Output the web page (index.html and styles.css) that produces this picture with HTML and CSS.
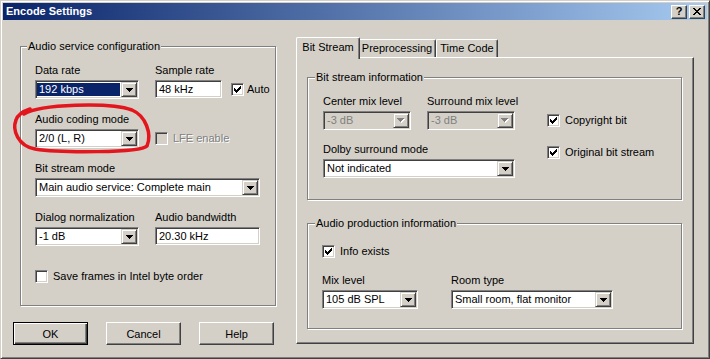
FILE: index.html
```html
<!DOCTYPE html>
<html>
<head>
<meta charset="utf-8">
<title>Encode Settings</title>
<link rel="stylesheet" href="styles.css">
</head>
<body>
<div class="window">
  <div class="titlebar">
    <span class="title">Encode Settings</span>
    <div class="capbtns">
      <span class="capbtn">?</span>
      <span class="capbtn"><svg class="xglyph" width="8" height="7" viewBox="0 0 8 7" shape-rendering="crispEdges"><path d="M0 0h2v1H0zM6 0h2v1H6zM1 1h2v1H1zM5 1h2v1H5zM2 2h4v1H2zM3 3h2v1H3zM2 4h4v1H2zM1 5h2v1H1zM5 5h2v1H5zM0 6h2v1H0zM6 6h2v1H6z"/></svg></span>
    </div>
  </div>

  <div class="client">
    <div class="leftcol">
      <div class="group g-audio">
        <span class="legend">Audio service configuration</span>

        <div class="row">
          <div class="field w104">
            <div class="lbl">Data rate</div>
            <div class="combo"><span class="val sel">192 kbps</span><span class="drop"><svg class="arrow" width="7" height="4" viewBox="0 0 7 4" shape-rendering="crispEdges"><path d="M0 0h7v1H0zM1 1h5v1H1zM2 2h3v1H2zM3 3h1v1H3z"/></svg></span></div>
          </div>
          <div class="field col2">
            <div class="lbl">Sample rate</div>
            <div class="inline">
              <div class="edit w67">48 kHz</div>
              <span class="check cb-auto"><svg width="7" height="7" viewBox="0 0 7 7" shape-rendering="crispEdges"><path d="M6 0h1v3H6zM5 1h1v3H5zM4 2h1v3H4zM3 3h1v3H3zM2 4h1v3H2zM1 3h1v3H1zM0 2h1v3H0z"/></svg></span>
              <span class="cblabel">Auto</span>
            </div>
          </div>
        </div>

        <div class="row gap14">
          <div class="field w104">
            <div class="lbl">Audio coding mode</div>
            <div class="combo"><span class="val">2/0 (L, R)</span><span class="drop"><svg class="arrow" width="7" height="4" viewBox="0 0 7 4" shape-rendering="crispEdges"><path d="M0 0h7v1H0zM1 1h5v1H1zM2 2h3v1H2zM3 3h1v1H3z"/></svg></span></div>
          </div>
          <div class="col2 lfe">
            <span class="check disabled"></span>
            <span class="cblabel dis">LFE enable</span>
          </div>
        </div>

        <div class="row gap14">
          <div class="field w225">
            <div class="lbl">Bit stream mode</div>
            <div class="combo"><span class="val">Main audio service: Complete main</span><span class="drop"><svg class="arrow" width="7" height="4" viewBox="0 0 7 4" shape-rendering="crispEdges"><path d="M0 0h7v1H0zM1 1h5v1H1zM2 2h3v1H2zM3 3h1v1H3z"/></svg></span></div>
          </div>
        </div>

        <div class="row gap14">
          <div class="field w104">
            <div class="lbl">Dialog normalization</div>
            <div class="combo"><span class="val">-1 dB</span><span class="drop"><svg class="arrow" width="7" height="4" viewBox="0 0 7 4" shape-rendering="crispEdges"><path d="M0 0h7v1H0zM1 1h5v1H1zM2 2h3v1H2zM3 3h1v1H3z"/></svg></span></div>
          </div>
          <div class="field col2 w105">
            <div class="lbl">Audio bandwidth</div>
            <div class="edit">20.30 kHz</div>
          </div>
        </div>

        <div class="cbrow saveframes">
          <span class="check"></span>
          <span class="cblabel">Save frames in Intel byte order</span>
        </div>
      </div>

      <div class="buttons">
        <div class="btn default">OK</div>
        <div class="btn">Cancel</div>
        <div class="btn">Help</div>
      </div>
    </div>

    <div class="rightcol">
      <div class="tabs">
        <div class="tab active t1">Bit Stream</div>
        <div class="tab t2">Preprocessing</div>
        <div class="tab t3">Time Code</div>
      </div>
      <div class="panel">
        <div class="group g-bits">
          <span class="legend">Bit stream information</span>
          <div class="bits-inner">
            <div class="bits-left">
              <div class="row">
                <div class="field w88">
                  <div class="lbl">Center mix level</div>
                  <div class="combo disabled"><span class="val">-3 dB</span><span class="drop"><svg class="arrow" width="8" height="5" viewBox="0 0 8 5" shape-rendering="crispEdges"><path fill="#fff" d="M1 1h7v1H1zM2 2h5v1H2zM3 3h3v1H3zM4 4h1v1H4z"/><path fill="#808080" d="M0 0h7v1H0zM1 1h5v1H1zM2 2h3v1H2zM3 3h1v1H3z"/></svg></span></div>
                </div>
                <div class="field w88 col2">
                  <div class="lbl">Surround mix level</div>
                  <div class="combo disabled"><span class="val">-3 dB</span><span class="drop"><svg class="arrow" width="8" height="5" viewBox="0 0 8 5" shape-rendering="crispEdges"><path fill="#fff" d="M1 1h7v1H1zM2 2h5v1H2zM3 3h3v1H3zM4 4h1v1H4z"/><path fill="#808080" d="M0 0h7v1H0zM1 1h5v1H1zM2 2h3v1H2zM3 3h1v1H3z"/></svg></span></div>
                </div>
              </div>
              <div class="field w192 gap13">
                <div class="lbl">Dolby surround mode</div>
                <div class="combo"><span class="val">Not indicated</span><span class="drop"><svg class="arrow" width="7" height="4" viewBox="0 0 7 4" shape-rendering="crispEdges"><path d="M0 0h7v1H0zM1 1h5v1H1zM2 2h3v1H2zM3 3h1v1H3z"/></svg></span></div>
              </div>
            </div>
            <div class="bits-right">
              <div class="cbrow cb-copy">
                <span class="check"><svg width="7" height="7" viewBox="0 0 7 7" shape-rendering="crispEdges"><path d="M6 0h1v3H6zM5 1h1v3H5zM4 2h1v3H4zM3 3h1v3H3zM2 4h1v3H2zM1 3h1v3H1zM0 2h1v3H0z"/></svg></span>
                <span class="cblabel">Copyright bit</span>
              </div>
              <div class="cbrow cb-orig">
                <span class="check"><svg width="7" height="7" viewBox="0 0 7 7" shape-rendering="crispEdges"><path d="M6 0h1v3H6zM5 1h1v3H5zM4 2h1v3H4zM3 3h1v3H3zM2 4h1v3H2zM1 3h1v3H1zM0 2h1v3H0z"/></svg></span>
                <span class="cblabel">Original bit stream</span>
              </div>
            </div>
          </div>
        </div>

        <div class="group g-prod">
          <span class="legend">Audio production information</span>
          <div class="cbrow">
            <span class="check"><svg width="7" height="7" viewBox="0 0 7 7" shape-rendering="crispEdges"><path d="M6 0h1v3H6zM5 1h1v3H5zM4 2h1v3H4zM3 3h1v3H3zM2 4h1v3H2zM1 3h1v3H1zM0 2h1v3H0z"/></svg></span>
            <span class="cblabel">Info exists</span>
          </div>
          <div class="row gap16">
            <div class="field w96">
              <div class="lbl">Mix level</div>
              <div class="combo"><span class="val">105 dB SPL</span><span class="drop"><svg class="arrow" width="7" height="4" viewBox="0 0 7 4" shape-rendering="crispEdges"><path d="M0 0h7v1H0zM1 1h5v1H1zM2 2h3v1H2zM3 3h1v1H3z"/></svg></span></div>
            </div>
            <div class="field w162 col-room">
              <div class="lbl">Room type</div>
              <div class="combo"><span class="val">Small room, flat monitor</span><span class="drop"><svg class="arrow" width="7" height="4" viewBox="0 0 7 4" shape-rendering="crispEdges"><path d="M0 0h7v1H0zM1 1h5v1H1zM2 2h3v1H2zM3 3h1v1H3z"/></svg></span></div>
            </div>
          </div>
        </div>
      </div>
    </div>
  </div>

  <svg class="annotation" width="710" height="359" viewBox="0 0 710 359">
    <path d="M24 114 C40 104,110 102,132 110 C146 116,152 134,147 146 C140 153,60 153,35 149 C18 146,12 130,16 120 C18 114,24 111,30 109" fill="none" stroke="#E3161E" stroke-width="3.5" stroke-linecap="round" stroke-linejoin="round"/>
  </svg>
</div>
</body>
</html>
```

FILE: styles.css
```css
* { box-sizing: border-box; }

html, body {
  margin: 0;
  padding: 0;
}

body {
  width: 710px;
  height: 359px;
  overflow: hidden;
  background: #D4D0C8;
  font-family: "Liberation Sans", Arial, sans-serif;
  font-size: 11px;
  color: #000;
}

/* ---------- window frame ---------- */
.window {
  position: relative;
  width: 710px;
  height: 359px;
  background: #D4D0C8;
  border: 1px solid;
  border-color: #D4D0C8 #404040 #404040 #D4D0C8;
  box-shadow: inset 1px 1px 0 #fff, inset -1px -1px 0 #808080;
  padding: 2px;
  display: flex;
  flex-direction: column;
}

.titlebar {
  height: 17px;
  flex: none;
  display: flex;
  align-items: center;
  justify-content: space-between;
  background: linear-gradient(to right, #0A246A 0%, #A6CAF0 100%);
  padding: 0 2px 0 3px;
}

.title {
  color: #fff;
  font-weight: bold;
  font-size: 11px;
  line-height: 13px;
}

.capbtns {
  display: flex;
  gap: 2px;
}

.capbtn {
  width: 16px;
  height: 14px;
  display: flex;
  align-items: center;
  justify-content: center;
  background: #D4D0C8;
  border: 1px solid;
  border-color: #fff #404040 #404040 #fff;
  box-shadow: inset -1px -1px 0 #808080;
  font-weight: bold;
  font-size: 11px;
  line-height: 11px;
  color: #000;
}

.xglyph { display: block; }

/* ---------- client ---------- */
.client {
  flex: 1;
  display: flex;
  padding: 0 13px 0 10px;
}

.leftcol {
  width: 263px;
  display: flex;
  flex-direction: column;
}

.rightcol {
  width: 398px;
  margin-left: 20px;
  display: flex;
  flex-direction: column;
}

/* ---------- group boxes ---------- */
.group {
  position: relative;
  border: 1px solid #808080;
  box-shadow: inset 1px 1px 0 #fff, 1px 1px 0 #fff;
}

.legend {
  position: absolute;
  top: -7px;
  left: 6px;
  padding: 0 1px;
  background: #D4D0C8;
  line-height: 13px;
  white-space: nowrap;
}

.g-audio {
  margin-top: 26px;
  margin-left: 7px;
  width: 256px;
  height: 260px;
  padding: 17px 0 0 14px;
}

.row {
  display: flex;
  align-items: flex-start;
}

.gap14 { margin-top: 14px; }
.gap13 { margin-top: 13px; }
.gap16 { margin-top: 16px; }

.col2 { margin-left: 16px; }

.field {
  display: flex;
  flex-direction: column;
}

.lbl {
  line-height: 13px;
  height: 13px;
  margin-bottom: 3px;
  white-space: nowrap;
}

.w88 { width: 88px; }
.w96 { width: 96px; }
.w104 { width: 104px; }
.w105 { width: 105px; }
.w162 { width: 162px; }
.w192 { width: 192px; }
.w225 { width: 225px; }
.w67 { width: 67px; }

.inline {
  display: flex;
  align-items: center;
}

/* ---------- combo / edit ---------- */
.combo {
  display: flex;
  height: 19px;
  background: #fff;
  border: 1px solid;
  border-color: #808080 #fff #fff #808080;
  box-shadow: inset 1px 1px 0 #404040, inset -1px -1px 0 #D4D0C8;
  padding: 1px;
}

.combo .val {
  flex: 1;
  line-height: 13px;
  height: 13px;
  margin: 1px 1px 1px 0;
  padding-left: 2px;
  white-space: nowrap;
  overflow: hidden;
}

.combo .val.sel {
  background: #0A246A;
  color: #fff;
}

.combo.disabled {
  background: #D4D0C8;
}

.combo.disabled .val {
  color: #808080;
}

.drop {
  width: 16px;
  height: 15px;
  flex: none;
  display: flex;
  align-items: center;
  justify-content: center;
  background: #D4D0C8;
  border: 1px solid;
  border-color: #D4D0C8 #404040 #404040 #D4D0C8;
  box-shadow: inset 1px 1px 0 #fff, inset -1px -1px 0 #808080;
}

.arrow { display: block; }

.edit {
  height: 18px;
  background: #fff;
  border: 1px solid;
  border-color: #808080 #fff #fff #808080;
  box-shadow: inset 1px 1px 0 #404040, inset -1px -1px 0 #D4D0C8;
  padding: 1px 2px 0 3px;
  line-height: 14px;
  white-space: nowrap;
}

/* ---------- check boxes ---------- */
.check {
  width: 13px;
  height: 13px;
  flex: none;
  display: flex;
  align-items: center;
  justify-content: center;
  background: #fff;
  border: 1px solid;
  border-color: #808080 #fff #fff #808080;
  box-shadow: inset 1px 1px 0 #404040, inset -1px -1px 0 #D4D0C8;
}

.check svg { display: block; }

.check.disabled { background: #D4D0C8; }

.cb-auto { margin-left: 9px; }

.cblabel {
  margin-left: 5px;
  line-height: 13px;
  white-space: nowrap;
}

.cb-auto + .cblabel { margin-left: 3px; }

.cblabel.dis {
  color: #808080;
  text-shadow: 1px 1px 0 #fff;
}

.cbrow {
  display: flex;
  align-items: center;
  height: 13px;
}

.lfe {
  display: flex;
  align-items: center;
  height: 19px;
  margin-top: 16px;
}

.saveframes { margin-top: 24px; }

/* ---------- push buttons ---------- */
.buttons {
  display: flex;
  gap: 18px;
  margin-top: 16px;
}

.btn {
  width: 75px;
  height: 23px;
  display: flex;
  align-items: center;
  justify-content: center;
  background: #D4D0C8;
  border: 1px solid;
  border-color: #fff #404040 #404040 #fff;
  box-shadow: inset -1px -1px 0 #808080;
}

.btn.default {
  border-color: #000;
  box-shadow: inset 1px 1px 0 #fff, inset -1px -1px 0 #404040, inset -2px -2px 0 #808080;
}

/* ---------- tabs ---------- */
.tabs {
  display: flex;
  align-items: flex-end;
  height: 20px;
  margin-top: 17px;
  padding-left: 2px;
}

.tab {
  height: 18px;
  display: flex;
  align-items: center;
  justify-content: center;
  background: #D4D0C8;
  border-top: 1px solid #fff;
  border-left: 1px solid #fff;
  border-right: 1px solid #404040;
  box-shadow: inset -1px 0 0 #808080;
  border-radius: 2px 2px 0 0;
  padding-bottom: 1px;
  white-space: nowrap;
}

.t1 { width: 60px; }
.t2 { width: 78px; }
.t3 { width: 62px; }

.tab.active {
  position: relative;
  z-index: 1;
  width: 64px;
  height: 22px;
  margin: 0 -2px -2px -2px;
  padding-bottom: 3px;
}

.panel {
  height: 287px;
  border: 1px solid;
  border-color: #fff #404040 #404040 #fff;
  box-shadow: inset -1px -1px 0 #808080;
  padding: 19px 0 0 10px;
}

.g-bits {
  width: 375px;
  height: 123px;
  padding: 17px 0 0 15px;
}

.g-bits .legend { left: 7px; }

.bits-inner {
  display: flex;
}

.bits-left {
  width: 192px;
}

.bits-right {
  margin-left: 32px;
  display: flex;
  flex-direction: column;
}

.cb-copy { margin-top: 19px; }
.cb-orig { margin-top: 19px; }

.g-prod {
  margin-top: 23px;
  width: 375px;
  height: 106px;
  padding: 21px 0 0 14px;
}

.g-prod .legend { left: 7px; }

.col-room { margin-left: 33px; }

/* ---------- annotation overlay ---------- */
.annotation {
  position: absolute;
  left: -1px;
  top: -1px;
  pointer-events: none;
}
```
